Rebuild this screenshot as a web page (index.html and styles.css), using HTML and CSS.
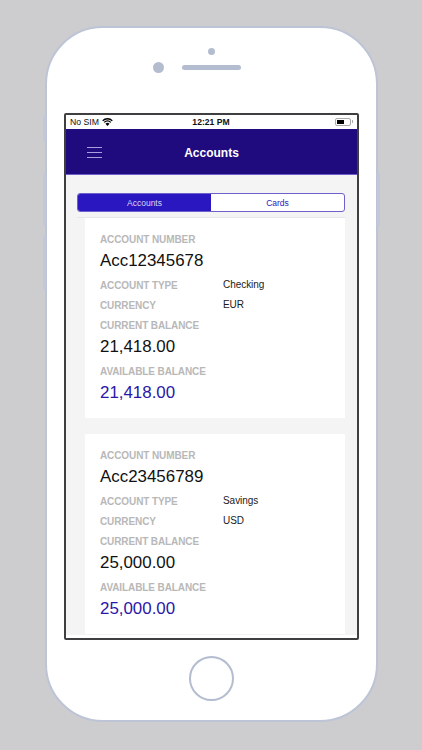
FILE: index.html
```html
<!DOCTYPE html>
<html lang="en">
<head>
<meta charset="utf-8">
<title>Accounts</title>
<link rel="stylesheet" href="styles.css">
</head>
<body>
<div class="phone">
  <span class="side side-mute"></span>
  <span class="side side-up"></span>
  <span class="side side-down"></span>
  <span class="side side-power"></span>
  <div class="earpiece">
    <span class="sensor"></span>
    <div class="speaker-row">
      <span class="camera"></span>
      <span class="speaker"></span>
    </div>
  </div>
  <div class="screen">
    <div class="status">
      <div class="status-left">
        <span>No SIM</span>
        <svg class="wifi" viewBox="0 0 12 9" width="11" height="8"><path d="M6 8.9 3.7 6.4a3.2 3.2 0 0 1 4.6 0z" fill="#000"/><path d="M2.3 4.9A5.3 5.3 0 0 1 9.7 4.9" fill="none" stroke="#000" stroke-width="1.5"/><path d="M.6 3A7.8 7.8 0 0 1 11.4 3" fill="none" stroke="#000" stroke-width="1.5"/></svg>
      </div>
      <span class="clock">12:21 PM</span>
      <div class="battery"><span class="battery-level"></span></div>
    </div>
    <header class="navbar">
      <div class="burger"><span></span><span></span><span></span></div>
      <h1>Accounts</h1>
    </header>
    <main class="content">
      <div class="tabs-bar">
        <div class="tabs">
          <div class="tab tab-active">Accounts</div>
          <div class="tab">Cards</div>
        </div>
      </div>
      <section class="card">
        <div class="label">ACCOUNT NUMBER</div>
        <div class="value">Acc12345678</div>
        <div class="row row-first"><span class="label">ACCOUNT TYPE</span><span class="detail">Checking</span></div>
        <div class="row"><span class="label">CURRENCY</span><span class="detail">EUR</span></div>
        <div class="label">CURRENT BALANCE</div>
        <div class="value">21,418.00</div>
        <div class="label label-gap">AVAILABLE BALANCE</div>
        <div class="value value-accent">21,418.00</div>
      </section>
      <section class="card">
        <div class="label">ACCOUNT NUMBER</div>
        <div class="value">Acc23456789</div>
        <div class="row row-first"><span class="label">ACCOUNT TYPE</span><span class="detail">Savings</span></div>
        <div class="row"><span class="label">CURRENCY</span><span class="detail">USD</span></div>
        <div class="label">CURRENT BALANCE</div>
        <div class="value">25,000.00</div>
        <div class="label label-gap">AVAILABLE BALANCE</div>
        <div class="value value-accent">25,000.00</div>
      </section>
    </main>
    <div class="screen-foot"></div>
  </div>
  <div class="home-row"><span class="home"></span></div>
</div>
</body>
</html>
```
FILE: styles.css
```css
* { box-sizing: border-box; }
html, body { margin: 0; height: 100%; }
body {
  width: 422px;
  height: 750px;
  overflow: hidden;
  background: #cdcdcf;
  font-family: "Liberation Sans", Arial, sans-serif;
  padding: 26px 44px 0 45px;
}
.phone {
  position: relative;
  width: 333px;
  height: 696px;
  background: #fff;
  border: 2px solid #bcc4d6;
  border-radius: 58px;
  padding: 0 17px;
  display: flex;
  flex-direction: column;
}
.side {
  position: absolute;
  width: 3px;
  background: #c2c8d8;
  border-radius: 1px;
}
.side-mute { left: -4px; top: 87px; height: 27px; }
.side-up { left: -4px; top: 145px; height: 53px; }
.side-down { left: -4px; top: 207px; height: 55px; }
.side-power { right: -4px; top: 145px; height: 53px; }
.earpiece {
  height: 85px;
  padding-top: 20px;
  display: flex;
  flex-direction: column;
  align-items: center;
  flex: none;
}
.sensor { width: 7px; height: 7px; border-radius: 50%; background: #b4bdd0; }
.speaker-row {
  display: flex;
  align-items: center;
  gap: 18px;
  margin-top: 7px;
  margin-left: -29px;
}
.camera { width: 11px; height: 11px; border-radius: 50%; background: #b4bdd0; }
.speaker { width: 59px; height: 5px; border-radius: 3px; background: #b4bdd0; }
.screen {
  width: 295px;
  height: 527px;
  flex: none;
  border: 2px solid #3f3f41;
  border-radius: 2px;
  overflow: hidden;
  background: #f4f4f5;
  display: flex;
  flex-direction: column;
}
.status {
  height: 14px;
  flex: none;
  background: #fff;
  display: grid;
  grid-template-columns: 1fr auto 1fr;
  align-items: center;
  padding: 0 5px 0 4px;
  font-size: 8.7px;
  color: #111;
}
.status-left { display: flex; align-items: center; gap: 3px; }
.wifi { display: block; }
.clock { font-weight: 700; font-size: 8.6px; }
.battery {
  position: relative;
  justify-self: end;
  width: 16px;
  height: 8px;
  margin-right: 1px;
  border: 1px solid #aaa;
  border-radius: 2px;
  padding: 1px;
}
.battery::after {
  content: "";
  position: absolute;
  right: -3px;
  top: 1px;
  width: 1px;
  height: 3px;
  background: #aaa;
}
.battery-level { display: block; width: 7px; height: 100%; background: #000; }
.navbar {
  height: 46px;
  flex: none;
  background: #1f0a7e;
  display: flex;
  align-items: center;
  justify-content: center;
  position: relative;
  padding-top: 2px;
  border-bottom: 1px solid #6e5fc8;
}
.navbar h1 {
  margin: 0;
  color: #fff;
  font-size: 12px;
  font-weight: 700;
}
.burger {
  position: absolute;
  left: 21px;
  top: 18px;
  width: 15px;
  display: flex;
  flex-direction: column;
  gap: 4px;
}
.burger span { display: block; height: 1px; background: #a89fe0; }
.content {
  flex: 1;
  min-height: 0;
  overflow: hidden;
  padding: 18px 12px 0 11px;
}
.tabs-bar {
  height: 25px;
  border-bottom: 1px solid #e6e6ec;
}
.tabs {
  display: flex;
  height: 19px;
  border: 1px solid #6e60cc;
  border-radius: 3px;
  overflow: hidden;
  background: #fff;
}
.tab {
  flex: 1;
  display: flex;
  align-items: center;
  justify-content: center;
  font-size: 8.5px;
  color: #2a17c0;
}
.tab-active { background: #2a17c0; color: #d8d5f5; }
.card {
  margin: 0 0 16px 8px;
  background: #fff;
  padding: 12px 15px 14px;
  height: 200px;
}
.label {
  font-size: 10px;
  letter-spacing: -0.1px;
  font-weight: 700;
  line-height: 20px;
  color: #b8b8b8;
}
.label-gap { margin-top: 4px; }
.value {
  font-size: 16.9px;
  line-height: 22px;
  color: #111;
}
.value-accent { color: #2a17a8; }
.row {
  display: grid;
  grid-template-columns: 123px 1fr;
  height: 20px;
  align-items: center;
}
.row-first { margin-top: 4px; }
.detail { font-size: 10px; letter-spacing: -0.05px; line-height: 18px; padding-bottom: 2px; color: #1a1a1a; }
.screen-foot { height: 3px; flex: none; background: #fff; }
.home-row { flex: 1; display: flex; justify-content: center; padding-top: 16px; padding-right: 1px; }
.home {
  width: 45px;
  height: 45px;
  border-radius: 50%;
  border: 2px solid #b4bdd0;
}
```
